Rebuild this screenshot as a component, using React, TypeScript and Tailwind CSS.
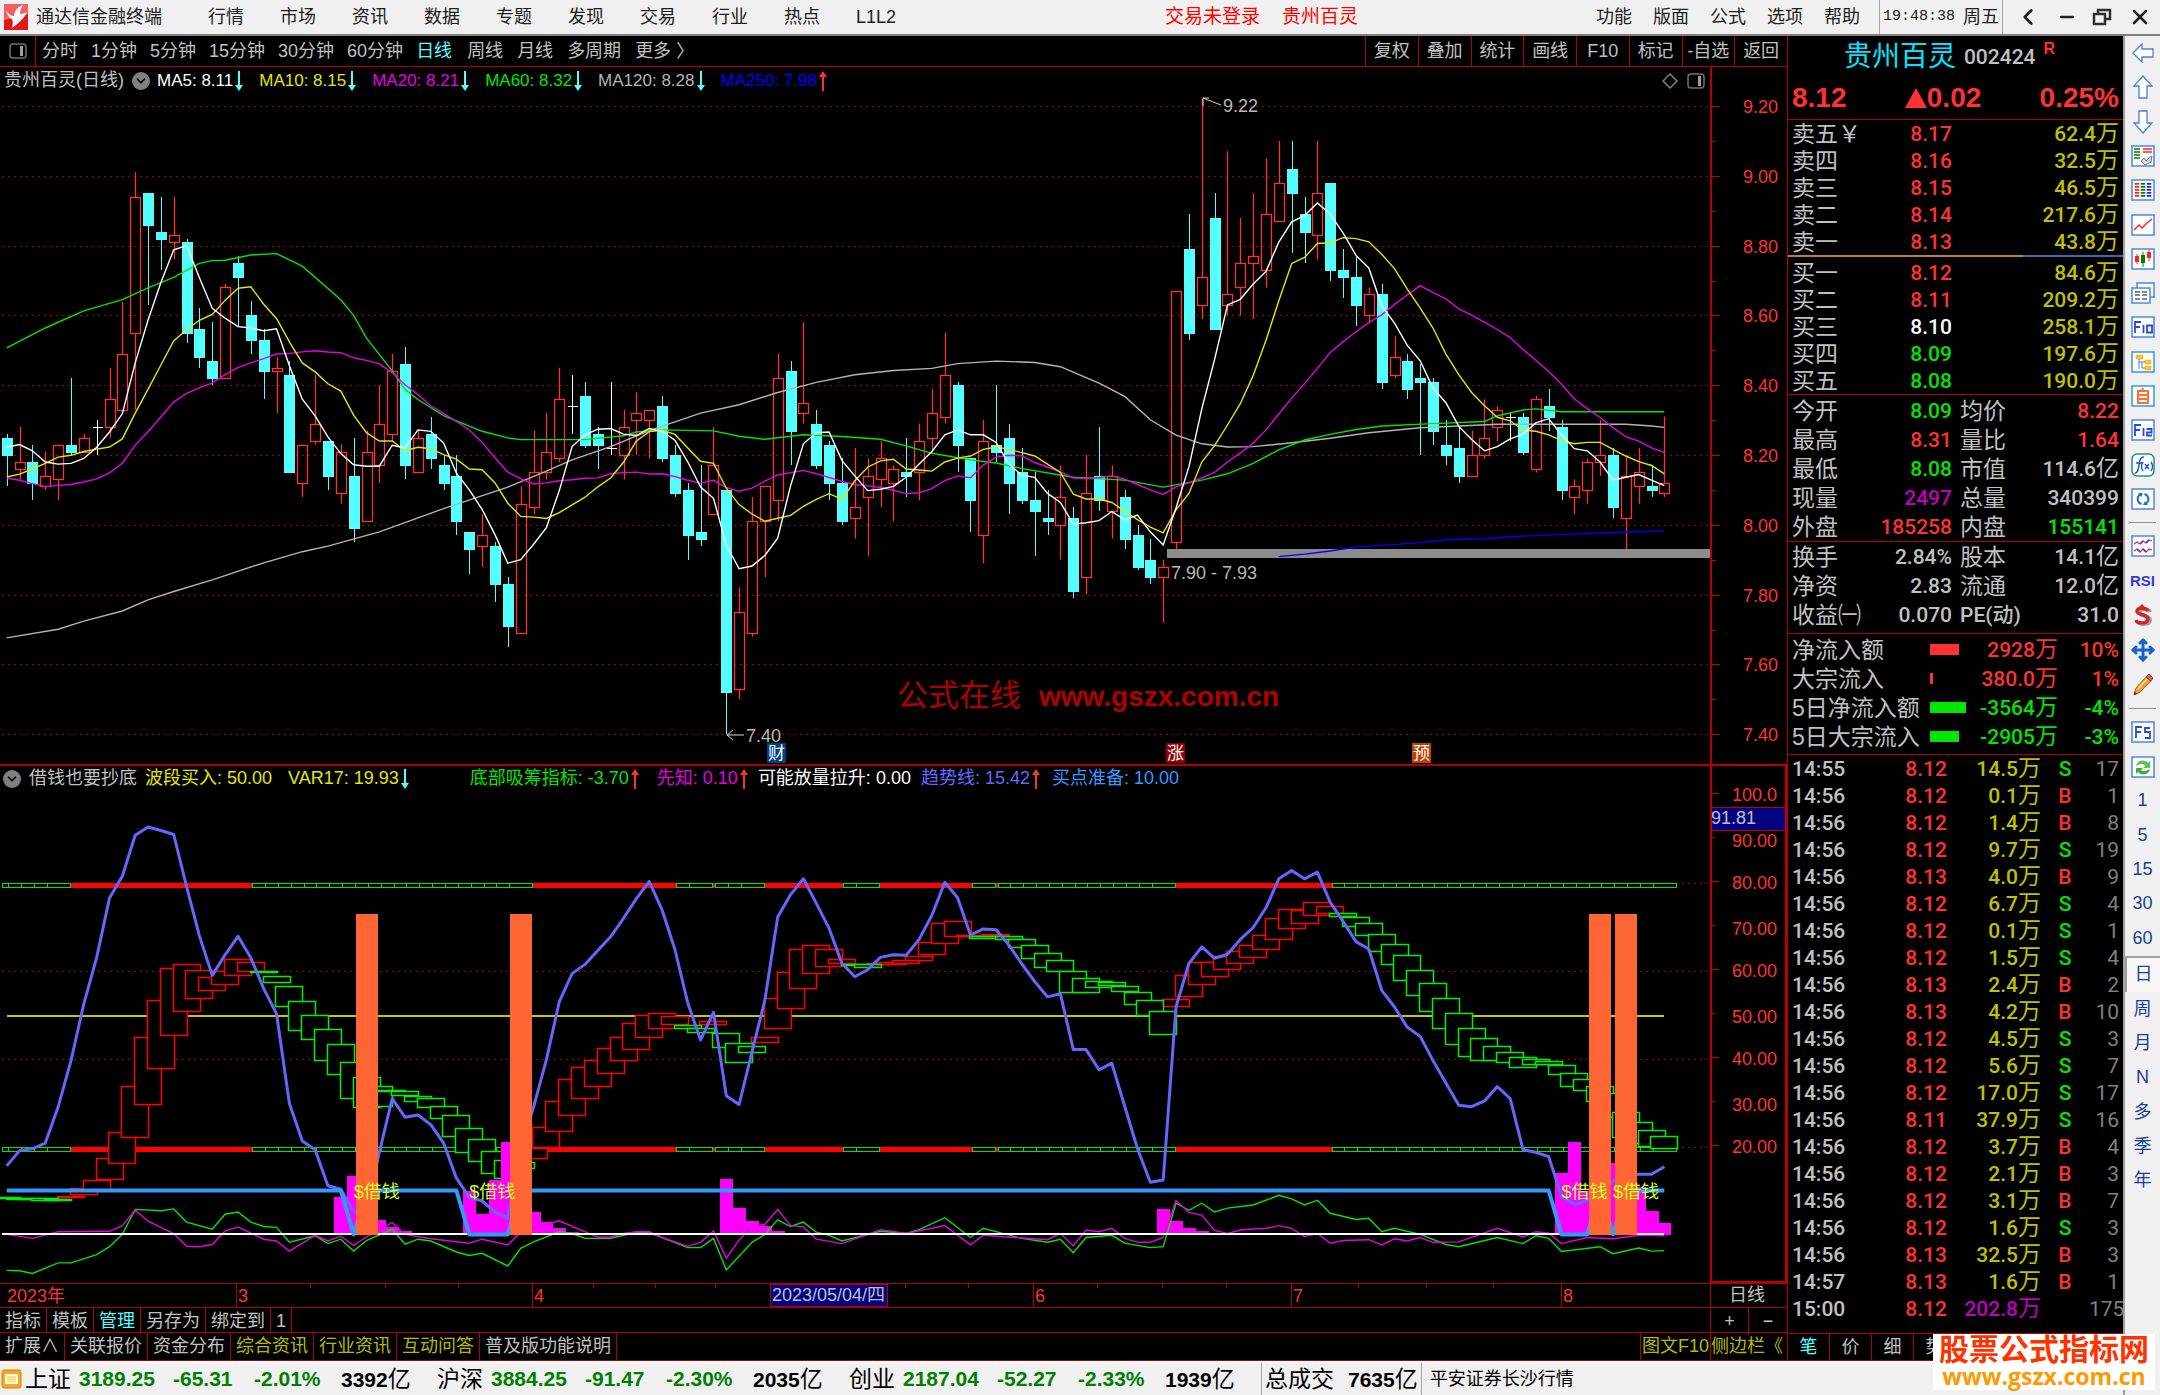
import { ReactNode } from "react";
import clsx from "clsx";
import { ChevronDown, ChevronLeft, Minus, Move, X } from "lucide-react";

type Point = [number, number];
// open, high, low, close in cents
type Candle = [number, number, number, number];

const candles: Candle[] = [
  [825, 826, 811, 820], [816, 828, 813, 818], [818, 823, 807, 812], [811, 821, 810, 814], [813, 823, 807, 823],
  [823, 842, 820, 821], [821, 826, 821, 825], [828, 830, 820, 828], [828, 845, 825, 836], [833, 864, 833, 849],
  [855, 901, 833, 894], [895, 895, 863, 886], [884, 894, 873, 882], [881, 894, 876, 883], [881, 882, 852, 855],
  [856, 862, 845, 848], [847, 858, 840, 842], [842, 869, 842, 868], [875, 877, 857, 871], [860, 864, 849, 853],
  [853, 856, 836, 844], [844, 848, 832, 845], [843, 847, 815, 815], [812, 823, 808, 823], [824, 843, 823, 829],
  [824, 824, 810, 814], [809, 823, 806, 821], [814, 825, 795, 799], [801, 827, 801, 821], [817, 840, 812, 829],
  [826, 849, 824, 844], [846, 851, 813, 817], [815, 827, 815, 825], [826, 831, 816, 819], [817, 820, 810, 812],
  [814, 820, 797, 801], [798, 798, 786, 793], [794, 803, 788, 797], [794, 795, 778, 783], [783, 785, 765, 771],
  [769, 811, 769, 806], [805, 827, 803, 815], [815, 832, 813, 821], [819, 845, 818, 836], [834, 843, 826, 834],
  [837, 841, 822, 823], [826, 828, 816, 823], [822, 841, 820, 822], [820, 833, 813, 828], [830, 838, 820, 832],
  [830, 833, 819, 833], [834, 837, 818, 819], [820, 823, 808, 809], [810, 812, 790, 797], [798, 817, 794, 796],
  [803, 828, 803, 817], [810, 810, 740, 752], [753, 782, 750, 775], [769, 808, 768, 801], [801, 811, 785, 811],
  [807, 849, 801, 842], [844, 847, 817, 827], [832, 858, 829, 835], [829, 833, 816, 817], [823, 824, 807, 812],
  [812, 819, 800, 801], [802, 822, 796, 805], [808, 819, 791, 814], [813, 824, 805, 819], [812, 817, 801, 816],
  [815, 825, 808, 814], [815, 829, 807, 824], [825, 839, 821, 832], [831, 855, 829, 843], [840, 841, 815, 823],
  [819, 819, 798, 807], [797, 830, 789, 824], [823, 840, 818, 821], [825, 829, 803, 812], [815, 822, 806, 807],
  [807, 815, 791, 804], [802, 810, 797, 801], [800, 817, 790, 808], [802, 805, 779, 781], [785, 820, 780, 809],
  [814, 828, 804, 807], [804, 817, 796, 814], [808, 810, 793, 796], [797, 800, 787, 788], [790, 796, 783, 785],
  [785, 790, 772, 788], [795, 867, 793, 867], [879, 889, 853, 855], [863, 922, 859, 871], [888, 895, 856, 856],
  [863, 907, 860, 866], [868, 888, 860, 875], [875, 895, 859, 877], [873, 905, 868, 889], [887, 910, 887, 898],
  [902, 910, 878, 895], [889, 894, 875, 884], [883, 910, 876, 895], [898, 898, 870, 873], [873, 879, 865, 871],
  [871, 877, 857, 863], [860, 868, 858, 866], [866, 869, 839, 841], [843, 854, 842, 848], [847, 849, 836, 839],
  [842, 846, 820, 841], [841, 842, 823, 827], [823, 830, 817, 820], [822, 828, 812, 814], [814, 827, 814, 820],
  [820, 836, 819, 825], [828, 834, 824, 833], [831, 832, 824, 831], [831, 832, 820, 821], [816, 837, 815, 836],
  [834, 839, 827, 831], [828, 830, 807, 810], [808, 813, 803, 811], [810, 819, 806, 818], [818, 830, 814, 820],
  [820, 822, 802, 805], [802, 820, 793, 814], [811, 822, 806, 815], [811, 817, 808, 810], [809, 831, 808, 812],
];

// closes before the first visible candle, oldest first
const earlierCloses = [831, 831, 831, 816, 816, 811, 810, 801, 794, 790, 810, 797, 798, 805, 816, 814, 821, 830, 826];

const ma60: Point[] = [
  [0, 850.7], [3, 856.4], [6, 861.3], [9, 864.5], [11, 867.9], [13, 870.9], [15, 874.9], [16, 875.7], [17, 875.8], [19, 877.3],
  [21, 877.7], [23, 874.1], [26, 864.5], [27, 860], [28, 853.5], [30, 844.1], [31, 838.8], [32, 835.9], [34, 831.3], [37, 826.8],
  [39, 824.9], [40, 824.4], [45, 824.4], [48, 825.5], [49, 826.6], [51, 827.2], [55, 826.9], [57, 825.4], [59, 824.5], [62, 825.8],
  [65, 825.3], [68, 824.5], [70, 822.6], [72, 820.5], [75, 818.6], [77, 817.7], [79, 816.1], [83, 813.6], [87, 812.8], [90, 810.8],
  [93, 812.8], [95, 814.6], [97, 817.6], [99, 821.5], [101, 824.3], [103, 825.9], [105, 827.3], [107, 828.3], [111, 829],
  [115, 829.6], [116, 831.2], [118, 832.9], [119, 833.2], [121, 832.4], [129, 832.4],
];
const ma120: Point[] = [
  [0, 767.6], [4, 770.1], [6, 772.4], [9, 775.3], [11, 778.5], [13, 780.9], [16, 784.2], [20, 789.1], [23, 792.3], [25, 793.9],
  [29, 798], [34, 804.6], [39, 810.8], [42, 815.4], [44, 818.6], [47, 822.4], [50, 827], [54, 832], [57, 834.4], [60, 837.9],
  [63, 840.8], [66, 843], [69, 844.2], [72, 844.8], [74, 846.2], [77, 846.9], [80, 846.5], [82, 845.3], [85, 840.6], [87, 836.8],
  [89, 830.1], [91, 825.7], [93, 823.2], [95, 822.3], [97, 822.4], [100, 823.5], [103, 824.8], [106, 826.4], [110, 827.8],
  [113, 828.3], [116, 828.8], [126, 828.8], [128, 828.3], [129, 827.9],
];
const ma250: Point[] = [
  [99, 790.9], [101, 791.6], [103, 792.5], [105, 793.6], [110, 794.9], [112, 795.7], [115, 796], [117, 796.6], [121, 797.2],
  [125, 797.8], [129, 798.2],
];

const trend = [
  15.6, 19.1, 19.5, 20.8, 29, 39.6, 52.5, 63.1, 76.6, 81.6, 90.9, 92.8, 92, 91.1, 79.2, 68, 59, 63.7, 67.9, 63, 56, 50.3, 29.8, 21.3,
  19.3, 11.1, 10.3, 5.2, 5, 18.7, 30.9, 26.7, 27.2, 25, 20.8, 12.8, 8.5, 7.6, 5.1, 3.7, 20, 29, 39.8, 53, 59.4, 61.5, 64.7, 67.8,
  72, 76.5, 80.4, 73.9, 64.9, 52.7, 44.3, 50.6, 31.6, 29.6, 41.6, 53.4, 72.3, 77.4, 81, 75.4, 69.7, 61.7, 58.7, 60.3, 63.1, 63.7,
  63.6, 67.2, 72.7, 80.2, 76.7, 68.2, 69.6, 69.4, 65.9, 61.6, 57.6, 54.1, 54.8, 42.1, 42.1, 37.5, 39, 29.2, 19.5, 11.9, 12.4, 51.8,
  61.7, 65.5, 62.9, 63.8, 67.2, 69.9, 74.4, 81, 82.9, 81, 82.5, 75.6, 71.3, 66.7, 65, 55.6, 51.8, 47.2, 45.1, 39.6, 34.5, 29.4,
  29.1, 30.4, 33.7, 30.9, 19.3, 18.7, 17.7, 8.7, 6.8, 7.7, 10, 12, 13.5, 13.7, 13.7, 15.4,
];

// top and bottom of the step box on every bar
const steps: Point[] = [
  [8.5, 8.2], [8.4, 8.1], [8.2, 7.9], [8.2, 7.8], [8.1, 7.8], [8.8, 8.4], [10.5, 9.1], [12.5, 10.1], [17.3, 12.5], [23.4, 16.2],
  [33.8, 22], [45, 29.5], [53.5, 37.8], [60.7, 45.3], [61.7, 50.7], [60.3, 53.8], [58.7, 55.5], [60.1, 56.9], [62.8, 58.9], [62.1, 60],
  [60, 59.6], [58.9, 57.3], [56.6, 51.8], [53.2, 46.4], [50, 44.3], [46.7, 39.5], [43.3, 36.5], [39.2, 31], [35.8, 28.9], [33.7, 29.2],
  [33, 32.5], [32.7, 31.6], [31.6, 30.3], [31, 28.9], [29.3, 26.5], [27.2, 22.4], [24.2, 18.7], [21.7, 16.6], [19, 13.9], [16.9, 12.8],
  [16.4, 14.9], [19.6, 17.3], [24.4, 19.7], [30.3, 23.5], [35.4, 27.1], [38.2, 30.9], [39.7, 33.7], [42.5, 36.7], [45, 39.5], [48.1, 42.2],
  [50, 44.9], [50.5, 46.8], [49.7, 47.7], [47.8, 47], [47, 46], [48.7, 47.7], [45.9, 42.5], [43.5, 39.1], [42.9, 41.5], [44.9, 43.6],
  [53.8, 47], [59.8, 51.5], [65.1, 55.9], [65.9, 59.4], [65.1, 61.1], [62.7, 61.7], [61.7, 61.3], [61.5, 60.9], [61.8, 61.5], [62.1, 61.5],
  [62.5, 61.7], [63.4, 62.5], [66.5, 63.7], [70.9, 66.2], [71.3, 67.8], [68.2, 67.9], [67.9, 67.4], [68.5, 68.2], [67.9, 67.2], [67.2, 65.4],
  [65.9, 62.8], [64.1, 60.7], [62.5, 59.8], [60, 55], [58.3, 55], [57.7, 56.3], [57.6, 56.6], [56.6, 55.3], [55.3, 52.4], [53.5, 49.8],
  [50.8, 45.6], [53.6, 51.8], [59, 54.2], [62.1, 56.9], [62.1, 58.7], [63.4, 60.3], [64.5, 61.7], [65.9, 63.1], [68.2, 64.8], [72, 67.2],
  [74.1, 69.6], [74, 70.9], [75.7, 72.6], [74.8, 73.2], [73.1, 72.5], [72.3, 70.2], [70.9, 68.2], [68.5, 64.5], [66.2, 61.4], [63.6, 57.9],
  [60.3, 54.5], [57.3, 50.7], [53.9, 47], [50.5, 43.3], [47, 40.5], [44.7, 39.5], [43, 39.5], [41.5, 39.1], [40.5, 38.1], [39.9, 38.6],
  [39.5, 38.6], [38.5, 36.4], [36.8, 33.7], [35.3, 32.7], [33.7, 30.3], [32.2, 26.7], [27.9, 22], [25.6, 20.7], [23.8, 20.1], [22.4, 19.6],
];
const fallingRuns: Point[] = [[0, 4], [20, 40], [53, 54], [56, 58], [66, 67], [76, 76], [78, 90], [104, 129]];

const volumes: Point[] = [
  [26, 8.5], [27, 13.3], [29, 3.3], [30, 1.6], [31, 0.7], [32, 0.4], [33, 0.3], [34, 0.2], [36, 9.8], [37, 4.7], [38, 12.5], [39, 21.1],
  [41, 5], [42, 2.8], [43, 1.4], [44, 0.6], [45, 0.3], [56, 12.6], [57, 6.1], [58, 3.1], [59, 1.8], [60, 0.7], [61, 0.4], [90, 5.8],
  [91, 3.1], [92, 1.4], [93, 0.7], [94, 0.4], [121, 14], [122, 21], [123, 10], [125, 16.3], [127, 10.8], [128, 5.4], [129, 2.7],
];
const prophet: Point[] = [
  [0, 0], [2, -0.9], [4, 0.6], [8, 0.7], [9, 2], [10, 5.5], [11, 3], [13, 0.2], [14, -2.7], [15, -2.8], [16, -2.3], [17, 0.8], [18, 1.7],
  [20, -1.1], [21, -1.5], [22, -3.8], [24, -0.2], [25, -1.5], [26, -0.4], [27, -2.5], [28, -0.6], [30, 2.7], [31, 0], [33, -1], [36, -2],
  [37, -1.1], [39, -2.4], [40, 0.5], [43, 3.1], [45, 0.6], [46, -0.6], [47, -0.6], [48, 0.2], [49, 0.6], [50, 0.6], [51, -0.7], [53, -2.7],
  [54, -1.8], [55, 0.8], [56, -5.4], [57, -1.3], [58, 1.8], [59, 2.3], [60, 5.7], [61, 2], [62, 1.7], [63, -1.1], [65, -2.1], [67, 0],
  [68, 1.1], [70, 0.2], [73, 2], [75, -2.4], [76, -0.2], [81, -1.2], [82, 0.2], [83, -2.6], [84, 1], [85, 0.6], [86, 1.4], [87, -0.9],
  [88, -1.8], [89, -1.8], [90, -0.7], [91, 7.7], [92, 5], [93, 4.4], [94, 0.9], [95, 0.2], [96, 1], [98, 1.4], [99, 2], [100, 1.4],
  [101, -0.5], [102, 0.2], [103, -2], [104, -1.4], [106, -1.2], [107, -2.4], [108, -1], [109, -1.5], [110, -0.7], [111, -1.8],
  [113, -1.7], [116, 1.4], [118, -0.6], [119, 0.6], [120, 0.3], [121, -2.1], [123, -0.7], [125, -1], [127, -0.2], [129, -0.3],
];
const bottomFishing: Point[] = [
  [0, -8.2], [1, -8.3], [2, -8.9], [4, -6.5], [5, -6.5], [7, -4.6], [8, -2.8], [9, 0], [10, 5.7], [12, 5.4], [13, 5.8], [14, 2.8],
  [16, 1.2], [17, 4.6], [18, 5.1], [19, 2.8], [20, 1.8], [21, 1.6], [22, -1.8], [24, -0.3], [25, -2.1], [26, -1.1], [27, -3.8], [28, -1.4],
  [30, 1.2], [31, -2.2], [32, -1.1], [33, -1.5], [35, -4], [36, -4.8], [37, -4.3], [39, -7.2], [40, -3.2], [41, -1.7], [43, 0.6],
  [44, 0.2], [45, -0.9], [47, -0.9], [48, -0.2], [49, 0.5], [50, 0.4], [53, -3], [54, -3], [55, -0.9], [56, -8.1], [58, -1.8], [59, 0],
  [60, 3.3], [61, 1.8], [62, 2.8], [63, 0.5], [64, -0.2], [65, -1.5], [68, 0.7], [70, 0.2], [71, 1.1], [73, 3.8], [75, -0.7], [76, 1.4],
  [79, -0.9], [81, -1.8], [82, -1.1], [83, -4.2], [84, -0.7], [86, -0.2], [87, -2], [89, -3], [90, -2.8], [91, 7.1], [92, 5.5],
  [93, 7.1], [94, 5.1], [95, 6], [97, 6.7], [99, 8.9], [100, 8.1], [101, 6.7], [102, 7.8], [103, 4.8], [105, 3.4], [106, 3.7],
  [107, 0.6], [108, 1.4], [110, 0], [112, -2.3], [113, -2.8], [116, -0.7], [118, -2.1], [119, -0.3], [120, -0.9], [121, -3.9],
  [124, -2.8], [125, -4.4], [127, -3.1], [128, -3.8], [129, -3.7],
];
const buyReady: Point[] = [
  [0, 10], [26, 10], [27, 0], [28, 10], [35, 10], [36, 0], [39, 0], [40, 10], [120, 10], [121, 0], [123, 0], [124, 10], [125, 0],
  [126, 10], [129, 10],
];
const signalBars = [28, 40, 124, 126];
const signalLabels = [27, 36, 121, 125];

const barX = (i: number) => 6.7 + 12.85 * i;
const priceY = (p: number) => 12 + (920 - p) * 3.49;
const valueY = (v: number) => 4.4 + (100 - v) * 4.39;

const toPoints = (points: Point[], y: (v: number) => number) =>
  points.map(([i, v]) => `${barX(i).toFixed(1)},${y(v).toFixed(1)}`).join(" ");

const movingAverage = (n: number): Point[] => {
  const closes = [...earlierCloses, ...candles.map((c) => c[3])];
  return candles.map((_, i) => {
    const end = i + earlierCloses.length + 1;
    return [i, closes.slice(end - n, end).reduce((a, b) => a + b, 0) / n];
  });
};

const averages = [
  { points: ma250, color: "#0000ff" },
  { points: ma120, color: "#b4b4b4" },
  { points: ma60, color: "#00e600" },
  { points: movingAverage(20), color: "#e600e6" },
  { points: movingAverage(10), color: "#e6e600" },
  { points: movingAverage(5), color: "#ffffff" },
];

const isFalling = (i: number) => fallingRuns.some(([a, b]) => i >= a && i <= b);
const byPhase = [
  ...steps.map((_, i) => i).filter((i) => !isFalling(i)),
  ...steps.map((_, i) => i).filter(isFalling),
];

function GridLine({ y }: { y: number }) {
  return <line x1="2" x2="100%" y1={y} y2={y} stroke="#a00000" strokeDasharray="2 4" />;
}

function PriceChart() {
  return (
    <svg className="block h-[670px] w-full" shapeRendering="crispEdges">
      {[920, 900, 880, 860, 840, 820, 800, 780, 760, 740].map((p) => (
        <GridLine key={p} y={Math.round(priceY(p)) + 0.5} />
      ))}
      <rect x="1167" y="455" width="100%" height="9" fill="#8c8c8c" />
      {candles.map(([open, high, low, close], i) => {
        const x = Math.round(barX(i)) + 0.5;
        const top = Math.round(priceY(Math.max(open, close)));
        const bottom = Math.round(priceY(Math.min(open, close)));
        if (open === close) {
          return (
            <path
              key={i}
              d={`M${x} ${priceY(high)}V${priceY(low)}M${x - 5} ${top + 0.5}h10`}
              stroke="#ffffff"
              strokeWidth="1.4"
            />
          );
        }
        if (close < open) {
          return (
            <g key={i} fill="#54ffff" stroke="#54ffff">
              <line x1={x} x2={x} y1={priceY(high)} y2={priceY(low)} />
              <rect x={x - 5} y={top} width="10" height={Math.max(bottom - top, 1)} />
            </g>
          );
        }
        return (
          <g key={i} stroke="#ff3232" fill="none" strokeWidth="1.3" shapeRendering="auto">
            <path d={`M${x} ${priceY(high)}V${top}M${x} ${bottom}V${priceY(low)}`} />
            <rect x={x - 5} y={top + 0.5} width="10" height={Math.max(bottom - top, 1)} />
          </g>
        );
      })}
      <g fill="none" strokeWidth="1.4" shapeRendering="auto">
        {averages.map((a) => (
          <polyline key={a.color} points={toPoints(a.points, priceY)} stroke={a.color} />
        ))}
      </g>
      <g fill="none" stroke="#d0d0d0" shapeRendering="auto">
        <path d="M1221 11 1203 4M1203 12V4h6" />
        <path d="M744 641h-17M733 636l-6 5 6 5" />
      </g>
      <g className="text-[18px]" fill="#b8b8b8">
        <text x="1223" y="18">9.22</text>
        <text x="746" y="648">7.40</text>
        <text x="1171" y="485">7.90 - 7.93</text>
      </g>
      <g fill="#b00000">
        <text x="897" y="612" className="text-[31px]">公式在线</text>
        <text x="1039" y="612" className="text-[28px] font-bold">www.gszx.com.cn</text>
      </g>
      {[
        { x: 767, text: "财", fill: "#004080" },
        { x: 1166, text: "涨", fill: "#900000" },
        { x: 1412, text: "预", fill: "#c04000" },
      ].map((m) => (
        <g key={m.text}>
          <rect x={m.x} y="649" width="19" height="20" fill={m.fill} />
          <text x={m.x + 1} y="665" fill="#ffffff" className="text-[17px]">{m.text}</text>
        </g>
      ))}
    </svg>
  );
}

function PriceAxis() {
  const ticks = Array.from({ length: 19 }, (_, i) => 920 - i * 10);
  return (
    <svg className="mt-[27px] block h-[670px] w-full">
      {ticks.map((p, i) => {
        const y = Math.round(priceY(p)) + 0.5;
        return (
          <g key={p}>
            <line x1="0" x2={i % 2 ? 4 : 8} y1={y} y2={y} stroke="#c00000" />
            {i % 2 === 0 && (
              <text x="66" y={y + 6} textAnchor="end" fill="#ff3232" className="text-[18px]">
                {(p / 100).toFixed(2)}
              </text>
            )}
          </g>
        );
      })}
    </svg>
  );
}

function IndicatorChart() {
  return (
    <svg className="block h-[492px] w-full" shapeRendering="crispEdges">
      {[80, 60, 40, 20].map((v) => (
        <GridLine key={v} y={Math.round(valueY(v)) + 0.5} />
      ))}
      <line x1={barX(0)} x2={barX(129)} y1="225" y2="225" stroke="#c8c800" strokeWidth="1.5" />
      {[80, 20].map((v) =>
        byPhase.map((i) => (
          <rect
            key={`${v}-${i}`}
            x={Math.max(2, Math.round(barX(i) - 11.5)) + 0.5}
            y={Math.round(valueY(v)) + 0.5}
            width={i === 0 ? 16 : 23}
            height="4"
            fill={isFalling(i) ? "#000000" : "#ff0000"}
            stroke={isFalling(i) ? "#00e600" : "#ff0000"}
          />
        ))
      )}
      {byPhase.map((i) => {
        const y = Math.round(valueY(steps[i][0])) + 0.5;
        return (
          <rect
            key={i}
            x={Math.round(barX(i) - 14) + 0.5}
            y={y}
            width="27"
            height={Math.max(1, Math.round(valueY(steps[i][1]) - y))}
            fill="#000000"
            stroke={isFalling(i) ? "#00f000" : "#ff0000"}
            strokeWidth="1.5"
            shapeRendering="auto"
          />
        );
      })}
      {volumes.map(([i, v]) => (
        <rect key={i} x={barX(i) - 6.5} y={valueY(v)} width="13.5" height={v * 4.39 + 1} fill="#ff00ff" />
      ))}
      <g fill="none" strokeWidth="1.4" shapeRendering="auto">
        <polyline points={toPoints(bottomFishing, valueY)} stroke="#00e600" />
        <polyline points={toPoints(prophet, valueY)} stroke="#e600e6" />
      </g>
      <line x1="2" x2={barX(129)} y1={valueY(0)} y2={valueY(0)} stroke="#ffffff" strokeWidth="2" />
      <g shapeRendering="auto" fill="none" strokeLinejoin="round">
        <polyline points={toPoints(trend.map((v, i) => [i, v]), valueY)} stroke="#6666ff" strokeWidth="3" />
        <polyline points={toPoints(buyReady, valueY)} stroke="#3399ff" strokeWidth="4" />
      </g>
      {signalBars.map((i) => (
        <rect key={i} x={Math.round(barX(i)) - 11} y={valueY(73)} width="22" height={73 * 4.39 + 1} fill="#ff6633" />
      ))}
      {signalLabels.map((i) => (
        <text key={i} x={barX(i)} y="407" fill="#ccff33" className="text-[18px]">$借钱</text>
      ))}
    </svg>
  );
}

function IndicatorAxis() {
  const ticks = [100, 90, 80, 70, 60, 50, 40, 30, 20];
  return (
    <svg className="block h-[515px] w-full">
      {ticks.map((v, i) => {
        const y = Math.round(valueY(v)) + 23.5;
        return (
          <g key={v}>
            <line x1="0" x2={i % 2 ? 3 : 7} y1={y} y2={y} stroke="#c00000" />
            <text x="65" y={y + (i % 2 ? 9 : 7)} textAnchor="end" fill="#ff3232" className="text-[18px]">
              {v === 100 ? "100.0" : v.toFixed(2)}
            </text>
          </g>
        );
      })}
      <rect x="-1" y="41.5" width="75" height="23" fill="#000080" stroke="#c00000" />
      <text x="-1" y="58" fill="#c0c0c0" className="text-[18px]">91.81</text>
    </svg>
  );
}

function DateAxis() {
  const months = [
    { x: 236, label: "3" },
    { x: 532, label: "4" },
    { x: 1033, label: "6" },
    { x: 1291, label: "7" },
    { x: 1561, label: "8" },
  ];
  return (
    <svg className="block h-[23px] w-full" shapeRendering="crispEdges">
      <g stroke="#b00000">
        {[310, 385, 458, 593, 655, 715, 905, 968, 1097, 1162, 1226, 1358, 1426, 1493].map((x) => (
          <line key={x} x1={x} x2={x} y1="0" y2="4" />
        ))}
        {months.map((m) => (
          <line key={m.x} x1={m.x} x2={m.x} y1="0" y2="23" />
        ))}
      </g>
      <g fill="#ff3232" className="text-[18px]">
        <text x="7" y="18">2023年</text>
        {months.map((m) => (
          <text key={m.x} x={m.x + 2} y="18">{m.label}</text>
        ))}
      </g>
      <rect x="770.5" y="0" width="117" height="22.5" fill="#000080" stroke="#b00000" />
      <text x="772" y="17" fill="#c0c0c0" className="text-[18px]">2023/05/04/四</text>
    </svg>
  );
}

function Trend({ up }: { up: boolean }) {
  return (
    <svg width="12" height="20" viewBox="0 0 12 20" className={up ? "text-[#ff3232]" : "text-[#54ffff]"}>
      <path
        d={up ? "M6 0 10 6H7v14H5V6H2z" : "M6 20 2 14h3V0h2v14h3z"}
        fill="currentColor"
      />
    </svg>
  );
}

interface LegendItem {
  text: string;
  color: string;
  up?: boolean;
}

function Legend({ items }: { items: LegendItem[] }) {
  return items.map((item) => (
    <span key={item.text} className={clsx("flex items-center", item.color)}>
      {item.text}
      {item.up !== undefined && <Trend up={item.up} />}
    </span>
  ));
}

function RoundChevron({ label }: { label: string }) {
  return (
    <button aria-label={label} className="flex size-[18px] items-center justify-center rounded-full bg-[#808080] text-black">
      <ChevronDown size={14} strokeWidth={3} />
    </button>
  );
}

function PanelIcon() {
  return (
    <svg width="18" height="16" viewBox="0 0 18 16">
      <rect x="1" y="1" width="16" height="14" rx="3" fill="none" stroke="#707070" strokeWidth="1.5" />
      <rect x="11" y="3" width="3" height="10" fill="#a0a0a0" />
    </svg>
  );
}

function MenuBar() {
  const menus = ["行情", "市场", "资讯", "数据", "专题", "发现", "交易", "行业", "热点", "L1L2"];
  const tools = ["功能", "版面", "公式", "选项", "帮助"];
  return (
    <header className="flex h-9 items-center border-b-2 border-[#808080] bg-[#f0f0f0] text-[18px] text-[#202020]">
      <svg width="24" height="26" viewBox="0 0 24 26" className="ml-1">
        <rect width="24" height="26" fill="#e01818" />
        <path d="M0 0h24v10L0 16z" fill="#f06060" />
        <path d="M2 6c2 4 5 6 8 6 0-4 3-9 9-11-2 3-3 6-3 9 3 0 5-1 7-2-2 5-7 10-15 16 1-4 1-7 0-9-3-1-5-4-6-9z" fill="#ffffff" />
      </svg>
      <h1 className="ml-2">通达信金融终端</h1>
      <nav className="ml-[46px] flex gap-9">
        {menus.map((m) => (
          <button key={m}>{m}</button>
        ))}
      </nav>
      <div className="ml-auto flex gap-[22px] text-[19px] text-[#ff0000]">
        <button>交易未登录</button>
        <button>贵州百灵</button>
      </div>
      <nav className="ml-[238px] flex gap-[21px]">
        {tools.map((t) => (
          <button key={t}>{t}</button>
        ))}
      </nav>
      <div className="ml-[19px] flex h-full items-center gap-2 border-x border-[#a0a0a0] px-[3px]">
        <time className="font-['Liberation_Mono'] text-[15px]">19:48:38</time>
        <span>周五</span>
      </div>
      <div className="ml-3 flex w-[145px] items-center justify-between pr-2">
        <button aria-label="后退"><ChevronLeft size={26} strokeWidth={2.5} /></button>
        <button aria-label="最小化"><Minus size={20} strokeWidth={3} /></button>
        <button aria-label="还原">
          <svg width="20" height="18" viewBox="0 0 20 18" fill="none" stroke="#303030" strokeWidth="2.500">
            <path d="M6 5V2h12v9h-4" />
            <path d="M2 6h11v10H2z" />
          </svg>
        </button>
        <button aria-label="关闭"><X size={24} strokeWidth={2.5} /></button>
      </div>
    </header>
  );
}

function PeriodBar() {
  const minutes = ["分时", "1分钟", "5分钟", "15分钟", "30分钟", "60分钟", "日线"];
  const longer = ["周线", "月线", "多周期", "更多 〉"];
  const actions = ["复权", "叠加", "统计", "画线", "F10", "标记", "-自选", "返回"];
  return (
    <div className="flex h-[31px] border-b border-[#b00000] text-[18px] text-[#c0c0c0]">
      <button aria-label="侧栏" className="flex w-9 items-center justify-center border-r border-[#b00000]">
        <PanelIcon />
      </button>
      <div className="flex items-center gap-[13px] pl-[6px]">
        {minutes.map((m) => (
          <button key={m} className={m === "日线" ? "text-[#54ffff]" : ""}>{m}</button>
        ))}
      </div>
      <div className="flex items-center gap-[14px] pl-[15px]">
        {longer.map((m) => (
          <button key={m}>{m}</button>
        ))}
      </div>
      <div className="ml-auto grid w-[422px] grid-cols-8">
        {actions.map((a) => (
          <button key={a} className="border-l border-[#b00000]">{a}</button>
        ))}
      </div>
    </div>
  );
}

function ChartArea() {
  return (
    <section className="flex min-w-0 flex-1 flex-col">
      <PeriodBar />
      <div className="flex">
        <div className="min-w-0 flex-1">
          <div className="flex h-[27px] items-center gap-[14px] pl-1 text-[17px]">
            <div className="flex items-center gap-[7px]">
              <h2 className="mr-px text-[18px] text-[#c0c0c0]">贵州百灵(日线)</h2>
              <RoundChevron label="主图指标" />
              <Legend items={[{ text: "MA5: 8.11", color: "text-white", up: false }]} />
            </div>
            <Legend
              items={[
                { text: "MA10: 8.15", color: "text-[#e6e600]", up: false },
                { text: "MA20: 8.21", color: "text-[#e600e6]", up: false },
                { text: "MA60: 8.32", color: "text-[#00e600]", up: false },
                { text: "MA120: 8.28", color: "text-[#b4b4b4]", up: false },
                { text: "MA250: 7.98", color: "text-[#0000ff]", up: true },
              ]}
            />
            <div className="ml-auto flex items-center gap-2 pr-[5px]">
              <svg width="18" height="18" viewBox="0 0 18 18">
                <path d="M9 2l7 7-7 7-7-7z" fill="none" stroke="#808080" strokeWidth="1.500" />
              </svg>
              <PanelIcon />
            </div>
          </div>
          <PriceChart />
        </div>
        <div className="w-[77px] border-l-2 border-[#b00000]">
          <PriceAxis />
        </div>
      </div>
      <div className="flex border-b border-[#b00000]">
        <div className="min-w-0 flex-1 border-t-2 border-[#b00000]">
          <div className="flex h-[25px] items-center gap-2 pl-[3px] text-[18px]">
            <RoundChevron label="副图指标" />
            <h2 className="text-[#c0c0c0]">借钱也要抄底</h2>
            <div className="flex gap-4">
              <Legend
                items={[
                  { text: "波段买入: 50.00", color: "text-[#e6e600]" },
                  { text: "VAR17: 19.93", color: "text-[#e6e600]", up: false },
                ]}
              />
            </div>
            <div className="flex gap-4 pl-[51px]">
              <Legend
                items={[
                  { text: "底部吸筹指标: -3.70", color: "text-[#00e600]", up: true },
                  { text: "先知: 0.10", color: "text-[#e600e6]", up: true },
                ]}
              />
            </div>
            <div className="flex gap-[10px]">
              <Legend
                items={[
                  { text: "可能放量拉升: 0.00", color: "text-white" },
                  { text: "趋势线: 15.42", color: "text-[#6666ff]", up: true },
                  { text: "买点准备: 10.00", color: "text-[#3399ff]" },
                ]}
              />
            </div>
          </div>
          <IndicatorChart />
        </div>
        <div className="w-[77px] border-2 border-[#c00000]">
          <IndicatorAxis />
        </div>
      </div>
      <div className="flex border-b border-[#b00000]">
        <div className="min-w-0 flex-1">
          <DateAxis />
        </div>
        <button className="w-[77px] border-l border-[#b00000] pr-1 text-[18px] leading-[23px] text-[#c0c0c0]">日线</button>
      </div>
      <ChartTabs />
    </section>
  );
}

function ChartTabs() {
  const templates = ["指标", "模板", "管理", "另存为", "绑定到"];
  const extensions = ["扩展∧", "关联报价", "资金分布", "综合资讯", "行业资讯", "互动问答", "普及版功能说明"];
  const highlighted = ["综合资讯", "行业资讯", "互动问答"];
  const cell = "border-r border-[#b00000] px-[5px]";
  return (
    <div className="text-[18px] text-[#c0c0c0]">
      <div className="flex h-[25px] border-b border-[#b00000]">
        {templates.map((t) => (
          <button key={t} className={clsx(cell, t === "管理" && "text-[#54ffff]")}>{t}</button>
        ))}
        <button className={cell}>1</button>
        <div className="ml-auto grid w-[77px] grid-cols-2 border-l border-[#b00000]">
          <button aria-label="放大" className="border-r border-[#b00000]">+</button>
          <button aria-label="缩小">−</button>
        </div>
      </div>
      <div className="flex h-[28px] border-b border-[#b00000]">
        {extensions.map((t) => (
          <button key={t} className={clsx(cell, highlighted.includes(t) && "text-[#b8b800]")}>{t}</button>
        ))}
        <button className="ml-auto border-l border-[#b00000] px-px text-[#b8b800]">图文F10</button>
        <button className="w-[77px] overflow-hidden border-l border-[#b00000] text-left whitespace-nowrap text-[#b8b800]">侧边栏《</button>
      </div>
    </div>
  );
}

// digits are bold, the unit behind them is not
function Amount({ children }: { children: string }) {
  const digits = children.replace(/[万亿]$/, "");
  const unit = children.slice(digits.length);
  return (
    <>
      <span className="font-['Roboto'] font-medium">{digits}</span>
      {unit && <span className="text-[23px]">{unit}</span>}
    </>
  );
}

const red = "text-[#ff3232]";
const green = "text-[#00e600]";
const gray = "text-[#c0c0c0]";
const purple = "text-[#c000c0]";

type Order = [string, string, string, string];
const asks: Order[] = [
  ["卖五", "8.17", red, "62.4万"],
  ["卖四", "8.16", red, "32.5万"],
  ["卖三", "8.15", red, "46.5万"],
  ["卖二", "8.14", red, "217.6万"],
  ["卖一", "8.13", red, "43.8万"],
];
const bids: Order[] = [
  ["买一", "8.12", red, "84.6万"],
  ["买二", "8.11", red, "209.2万"],
  ["买三", "8.10", "text-white", "258.1万"],
  ["买四", "8.09", green, "197.6万"],
  ["买五", "8.08", green, "190.0万"],
];

function Orders({ rows }: { rows: Order[] }) {
  return (
    <table className="w-full table-fixed">
      <tbody>
        {rows.map(([name, price, color, amount]) => (
          <tr key={name} className="h-[27px]">
            <th scope="row" className={clsx("w-[90px] text-left text-[23px] font-normal", gray)}>
              {name}
              {name === "卖五" && "￥"}
            </th>
            <td className={clsx("w-[70px] text-right", color)}><Amount>{price}</Amount></td>
            <td className="text-right text-[#c0c000]"><Amount>{amount}</Amount></td>
          </tr>
        ))}
      </tbody>
    </table>
  );
}

type Stat = [string, string, string, string, string, string];
const dayStats: Stat[] = [
  ["今开", "8.09", green, "均价", "8.22", red],
  ["最高", "8.31", red, "量比", "1.64", red],
  ["最低", "8.08", green, "市值", "114.6亿", gray],
  ["现量", "2497", purple, "总量", "340399", gray],
  ["外盘", "185258", red, "内盘", "155141", green],
];
const companyStats: Stat[] = [
  ["换手", "2.84%", gray, "股本", "14.1亿", gray],
  ["净资", "2.83", gray, "流通", "12.0亿", gray],
  ["收益㈠", "0.070", gray, "PE(动)", "31.0", gray],
];

function Stats({ rows }: { rows: Stat[] }) {
  return (
    <table className="w-full table-fixed">
      <tbody>
        {rows.map(([a, av, ac, b, bv, bc]) => (
          <tr key={a} className="h-[29px]">
            <th scope="row" className={clsx("w-[75px] text-left text-[23px] font-normal", gray)}>{a}</th>
            <td className={clsx("w-[85px] text-right", ac)}><Amount>{av}</Amount></td>
            <th
              scope="row"
              className={clsx(
                "w-[75px] pl-2 text-left",
                gray,
                b.startsWith("PE") ? "font-['Roboto','Noto_Sans_CJK_SC'] text-[21px] font-medium" : "text-[23px] font-normal"
              )}
            >
              {b}
            </th>
            <td className={clsx("text-right", bc)}><Amount>{bv}</Amount></td>
          </tr>
        ))}
      </tbody>
    </table>
  );
}

const flows = [
  { name: "净流入额", bar: 29, amount: "2928万", ratio: "10%", up: true },
  { name: "大宗流入", bar: 3, amount: "380.0万", ratio: "1%", up: true },
  { name: "5日净流入额", bar: 36, amount: "-3564万", ratio: "-4%", up: false },
  { name: "5日大宗流入", bar: 29, amount: "-2905万", ratio: "-3%", up: false },
];

function Flows() {
  return (
    <table className="w-full table-fixed">
      <tbody>
        {flows.map((f) => (
          <tr key={f.name} className={clsx("h-[29px]", f.up ? red : green)}>
            <th scope="row" className={clsx("w-[138px] text-left text-[23px] font-normal whitespace-nowrap", gray)}>{f.name}</th>
            <td className="w-[40px]">
              <div className={clsx("h-[11px]", f.up ? "bg-[#ff3232]" : "bg-[#00e600]")} style={{ width: f.bar }} />
            </td>
            <td className="w-[88px] text-right whitespace-nowrap"><Amount>{f.amount}</Amount></td>
            <td className="text-right"><Amount>{f.ratio}</Amount></td>
          </tr>
        ))}
      </tbody>
    </table>
  );
}

const trades: [string, string, string, string, string][] = [
  ["14:55", "8.12", "14.5万", "S", "17"],
  ["14:56", "8.12", "0.1万", "B", "1"],
  ["14:56", "8.12", "1.4万", "B", "8"],
  ["14:56", "8.12", "9.7万", "S", "19"],
  ["14:56", "8.13", "4.0万", "B", "9"],
  ["14:56", "8.12", "6.7万", "S", "4"],
  ["14:56", "8.12", "0.1万", "S", "1"],
  ["14:56", "8.12", "1.5万", "S", "4"],
  ["14:56", "8.13", "2.4万", "B", "2"],
  ["14:56", "8.13", "4.2万", "B", "10"],
  ["14:56", "8.12", "4.5万", "S", "3"],
  ["14:56", "8.12", "5.6万", "S", "7"],
  ["14:56", "8.12", "17.0万", "S", "17"],
  ["14:56", "8.11", "37.9万", "S", "16"],
  ["14:56", "8.12", "3.7万", "B", "4"],
  ["14:56", "8.12", "2.1万", "B", "3"],
  ["14:56", "8.12", "3.1万", "B", "7"],
  ["14:56", "8.12", "1.6万", "S", "3"],
  ["14:56", "8.13", "32.5万", "B", "3"],
  ["14:57", "8.13", "1.6万", "B", "1"],
  ["15:00", "8.12", "202.8万", "", "175"],
];

function Trades() {
  return (
    <table className="w-full table-fixed">
      <tbody>
        {trades.map(([time, price, amount, side, count], i) => (
          <tr key={i} className="h-[27px]">
            <td className={clsx("w-[75px]", gray)}><Amount>{time}</Amount></td>
            <td className={clsx("w-[80px] text-right", red)}><Amount>{price}</Amount></td>
            <td className={clsx("w-[94px] text-right", side ? "text-[#c0c000]" : purple)}><Amount>{amount}</Amount></td>
            <td className={clsx("w-[48px] text-center", side === "S" ? green : red)}><Amount>{side}</Amount></td>
            <td className="text-right font-['Roboto'] text-[#808080]">{count}</td>
          </tr>
        ))}
      </tbody>
    </table>
  );
}

function QuotePanel() {
  return (
    <section className="flex w-[336px] shrink-0 flex-col border-l border-[#b00000] text-[21px] leading-[26px]">
      <div className="h-[84px] border-b border-[#b00000] px-1">
        <div className="flex h-[41px] items-center justify-center gap-2 pr-3">
          <h2 className="text-[28px] text-[#00e5ff]">贵州百灵</h2>
          <span className={clsx("font-['Roboto'] font-medium", gray)}>002424</span>
          <sup className={clsx("text-[16px] font-bold", red)}>R</sup>
        </div>
        <div className={clsx("flex h-[42px] items-center justify-between text-[28px] font-bold", red)}>
          <span>8.12</span>
          <span className="flex items-center">
            <svg width="22" height="20" viewBox="0 0 22 20">
              <path d="M11 0l11 20H0z" fill="#ff3232" />
            </svg>
            0.02
          </span>
          <span>0.25%</span>
        </div>
      </div>
      <div className="px-1">
        <Orders rows={asks} />
      </div>
      <div className="flex">
        <div className="h-[2px] flex-[7] bg-[#c08030]" />
        <div className="h-[2px] flex-[3] bg-[#3070b0]" />
      </div>
      <div className="border-b border-[#b00000] px-1 pt-0.5">
        <Orders rows={bids} />
      </div>
      <div className="border-b border-[#b00000] px-1 pt-px">
        <Stats rows={dayStats} />
      </div>
      <div className="border-b border-[#b00000] px-1 pb-1">
        <Stats rows={companyStats} />
      </div>
      <div className="border-b border-[#b00000] px-1 pt-px pb-[3px]">
        <Flows />
      </div>
      <div className="flex-1 px-1">
        <Trades />
      </div>
      <div className="flex h-[28px] border-y border-[#b00000] text-[18px] text-[#c0c0c0]">
        {["笔", "价", "细", "势"].map((t) => (
          <button key={t} className={clsx("w-[42px] border-r border-[#b00000]", t === "笔" && "text-[#54ffff]")}>{t}</button>
        ))}
      </div>
    </section>
  );
}

function StatusBar() {
  const indexes = [
    ["上证", "3189.25", "-65.31", "-2.01%", "3392"],
    ["沪深", "3884.25", "-91.47", "-2.30%", "2035"],
    ["创业", "2187.04", "-52.27", "-2.33%", "1939"],
  ];
  return (
    <footer className="flex h-[34px] items-center border-t-2 border-white bg-[#f0f0f0] text-[21px] text-black">
      <svg width="22" height="20" viewBox="0 0 22 20" className="ml-px mr-[2px]">
        <rect x="1" y="1" width="19" height="18" rx="2" fill="#f8a820" stroke="#d88000" />
        <rect x="5" y="6" width="11" height="8" fill="#ffe080" stroke="#ffffff" strokeWidth="2" />
      </svg>
      {indexes.map(([name, value, change, ratio, turnover]) => (
        <div key={name} className="grid w-[412px] grid-cols-[54px_94px_81px_87px_96px] items-center font-bold text-[#008000]">
          <span className="text-[23px] font-normal text-black">{name}</span>
          <span>{value}</span>
          <span>{change}</span>
          <span>{ratio}</span>
          <span className="text-black">
            {turnover}
            <span className="text-[23px] font-normal">亿</span>
          </span>
        </div>
      ))}
      <div className="flex h-full items-center gap-[14px] border-x border-[#a0a0a0] px-[3px]">
        <span className="text-[23px]">总成交</span>
        <span className="font-bold">
          7635<span className="text-[23px] font-normal">亿</span>
        </span>
      </div>
      <span className="ml-2 text-[18px]">平安证券长沙行情</span>
    </footer>
  );
}

function Tile({ children, stroke = "#4a86e8" }: { children: ReactNode; stroke?: string }) {
  return (
    <svg width="24" height="22" viewBox="0 0 24 22">
      <rect x="1" y="1" width="22" height="20" fill="#ffffff" stroke={stroke} strokeWidth="1.500" />
      {children}
    </svg>
  );
}

const chartTools: { label: string; icon: ReactNode }[] = [
  {
    label: "返回",
    icon: (
      <svg width="22" height="20" viewBox="0 0 22 20">
        <path d="M1 10l9-9v5h11v8H10v5z" fill="#ffffff" stroke="#4a7fe0" strokeWidth="1.300" />
      </svg>
    ),
  },
  {
    label: "上一个",
    icon: (
      <svg width="20" height="24" viewBox="0 0 20 24">
        <path d="M10 1l9 10h-5v12H6V11H1z" fill="#ffffff" stroke="#4a7fe0" strokeWidth="1.300" />
      </svg>
    ),
  },
  {
    label: "下一个",
    icon: (
      <svg width="20" height="24" viewBox="0 0 20 24">
        <path d="M10 23l9-10h-5V1H6v12H1z" fill="#ffffff" stroke="#4a7fe0" strokeWidth="1.300" />
      </svg>
    ),
  },
  {
    label: "自选股",
    icon: (
      <Tile>
        <path d="M3 4h6M3 7h6M3 10h6M3 13h6" stroke="#008000" strokeWidth="1.600" />
        <path d="M12 4h9M12 7h9" stroke="#ff2020" strokeWidth="1.600" />
        <path d="M10 16l4 4 6-3 1-6-3 2-3 3-2-3z" fill="#e0e0e0" stroke="#707070" />
      </Tile>
    ),
  },
  {
    label: "行情表",
    icon: (
      <Tile>
        <g strokeWidth="4.500" strokeDasharray="1.800 1.200">
          <path d="M6 4v14" stroke="#ff2020" />
          <path d="M12 4v14" stroke="#008000" />
          <path d="M18 4v14" stroke="#2020ff" />
        </g>
      </Tile>
    ),
  },
  {
    label: "分时图",
    icon: (
      <Tile>
        <path d="M3 16l5-5 3 3 5-5 5-4" fill="none" stroke="#ff2020" strokeWidth="1.500" />
      </Tile>
    ),
  },
  {
    label: "K线图",
    icon: (
      <Tile>
        <path d="M6 6v10M18 2v11" stroke="#ff2020" />
        <path d="M12 4v15" stroke="#008000" />
        <path d="M4 8h4v6H4zM16 4h4v6h-4z" fill="#ff2020" />
        <path d="M10 7h4v8h-4z" fill="#008000" />
      </Tile>
    ),
  },
  {
    label: "报表",
    icon: (
      <svg width="24" height="22" viewBox="0 0 24 22" fill="#ffffff" stroke="#4a86e8" strokeWidth="1.500">
        <rect x="6" y="1" width="17" height="14" />
        <rect x="1" y="6" width="18" height="15" />
        <path d="M4 10h5M11 10h5M4 13h5M11 13h5M4 17h5M11 17h5" stroke="#606060" />
      </svg>
    ),
  },
  {
    label: "F10资料",
    icon: (
      <Tile>
        <path d="M4 17V6h6M4 11h5M12.500 9v8M16 9.500h5v7h-5z" fill="none" stroke="#2848d8" strokeWidth="1.800" />
      </Tile>
    ),
  },
  {
    label: "板块",
    icon: (
      <Tile stroke="#3098f0">
        <path d="M8 7v11M8 11h6M11 11v6h3" fill="none" stroke="#4080e0" />
        <path d="M5 4h7v4H5zM14 9h6v4h-6zM14 15h6v4h-6z" fill="#ffc820" stroke="#e0a000" strokeWidth="0.500" />
      </Tile>
    ),
  },
  {
    label: "自选",
    icon: (
      <Tile stroke="#3098f0">
        <path d="M12 3l-1 3M7 6h10v12H7zM7 10h10M7 14h10" fill="none" stroke="#ff7030" strokeWidth="2" />
      </Tile>
    ),
  },
  {
    label: "F12交易",
    icon: (
      <Tile>
        <path d="M4 17V6h6M4 11h5M12.500 9v8M15.500 10h5v3.500h-4.500v3h5" fill="none" stroke="#2848d8" strokeWidth="1.800" />
      </Tile>
    ),
  },
  {
    label: "公式",
    icon: (
      <svg width="24" height="24" viewBox="0 0 24 24" fill="none">
        <rect x="1" y="1" width="22" height="22" rx="5" fill="#ffffff" stroke="#209090" strokeWidth="1.500" />
        <path d="M4 20c3 0 3-3 4-8s1-8 5-8M5 10h6M12 9c-2 3-2 6 0 9M20 9c2 3 2 6 0 9M14 11l4 5M18 11l-4 5" stroke="#2050d0" strokeWidth="1.400" />
      </svg>
    ),
  },
  {
    label: "刷新",
    icon: (
      <Tile>
        <path d="M10.500 16a5.300 5.300 0 0 1-1.500-9.500M13.500 6a5.300 5.300 0 0 1 1.500 9.500" fill="none" stroke="#2070c8" strokeWidth="2" />
        <path d="M7 5h5l-2 4zM17 17h-5l2-4z" fill="#2070c8" />
      </Tile>
    ),
  },
];

const drawTools: { label: string; icon: ReactNode }[] = [
  {
    label: "多指标",
    icon: (
      <Tile>
        <path d="M3 9l3-2 3 2 3-3 3 2 3-3 3 1M3 16l3-2 3 3 3-3 3 3 3-3 3 1" fill="none" stroke="#ff2020" strokeWidth="1.300" />
        <path d="M9 9l3-3M15 8l3-3M6 14l3 3M12 14l3 3" stroke="#2040ff" strokeWidth="1.500" />
      </Tile>
    ),
  },
  { label: "RSI指标", icon: <span className="text-[15px] font-bold text-[#3838d8]">RSI</span> },
  {
    label: "资金",
    icon: (
      <svg width="18" height="24" viewBox="0 0 18 24" fill="none">
        <path d="M16 9c-1-3-10-4-11 0s11 3 11 8-11 5-12 1" stroke="#a0a0a0" strokeWidth="4" />
        <path d="M14 8c-1-3-10-4-11 0s11 3 11 8-11 5-12 1" stroke="#d02828" strokeWidth="3.500" />
        <path d="M4 5l4-4 4 4z" fill="#d02828" />
      </svg>
    ),
  },
  { label: "移动", icon: <Move size={24} strokeWidth={3} className="text-[#1860d0]" /> },
  {
    label: "画笔",
    icon: (
      <svg width="22" height="24" viewBox="0 0 22 24">
        <path d="M2 22l2-7L14 4l5 4L8 19z" fill="#f0a030" stroke="#a06010" />
        <path d="M14 4l3-3 4 4-2 3z" fill="#e06060" stroke="#904040" />
        <path d="M2 22l1-3 2 2z" fill="#303030" />
        <path d="M6 16l9-10" stroke="#ffe090" strokeWidth="1.500" />
      </svg>
    ),
  },
];

function SideTools() {
  const periods = ["1", "5", "15", "30", "60", "日", "周", "月", "N", "多", "季", "年"];
  return (
    <aside className="flex w-[37px] shrink-0 flex-col border-l-2 border-[#a0a0a0] bg-[#f0f0f0] text-[18px] text-[#1c3f94]">
      <div className="flex h-[480px] flex-col">
        {chartTools.map((t) => (
          <button key={t.label} aria-label={t.label} className="flex flex-1 items-center justify-center">{t.icon}</button>
        ))}
      </div>
      <hr className="mx-1 my-[6px] border-[#909090]" />
      <div className="flex h-[173px] flex-col">
        {drawTools.map((t) => (
          <button key={t.label} aria-label={t.label} className="flex flex-1 items-center justify-center">{t.icon}</button>
        ))}
      </div>
      <hr className="mx-1 my-[6px] border-[#909090]" />
      <div className="flex h-[483px] flex-col">
        <button aria-label="F5切换" className="flex flex-1 items-center justify-center">
          <Tile>
            <path d="M5 17V6h6M5 11h5M19 7h-5v4h5v6h-5" fill="none" stroke="#2848d8" strokeWidth="1.800" />
          </Tile>
        </button>
        <button aria-label="同步" className="flex flex-1 items-center justify-center">
          <Tile>
            <path d="M5 10c1-6 9-7 12-3l2-2v7h-7l2-2c-2-3-5-2-9 0z" fill="#60c050" />
            <path d="M19 13c-1 6-9 7-12 3l-2 2v-6h7l-2 2c2 2 5 1 9-1z" fill="#48a840" />
          </Tile>
        </button>
        {periods.map((p) => (
          <button
            key={p}
            className={clsx("flex-1", p === "日" && "border-l-2 border-t-2 border-[#a0a0a0] bg-[#f8f8f8]")}
          >
            {p}
          </button>
        ))}
      </div>
    </aside>
  );
}

export default function App() {
  return (
    <div className="relative flex min-h-screen flex-col bg-black font-['Liberation_Sans','Noto_Sans_CJK_SC',sans-serif]">
      <MenuBar />
      <div className="flex flex-1">
        <main className="flex min-w-0 flex-1 flex-col">
          <div className="flex flex-1">
            <ChartArea />
            <QuotePanel />
          </div>
          <StatusBar />
        </main>
        <SideTools />
      </div>
      <a
        href="#gszx"
        className="absolute right-[5px] bottom-[5px] flex h-[56px] w-[222px] flex-col items-center bg-white font-bold"
      >
        <span className="text-[30px] leading-[32px] text-[#ff3300]">股票公式指标网</span>
        <span className="font-['Open_Sans'] text-[23px] leading-[20px] text-[#ff9900]">www.gszx.com.cn</span>
      </a>
    </div>
  );
}
